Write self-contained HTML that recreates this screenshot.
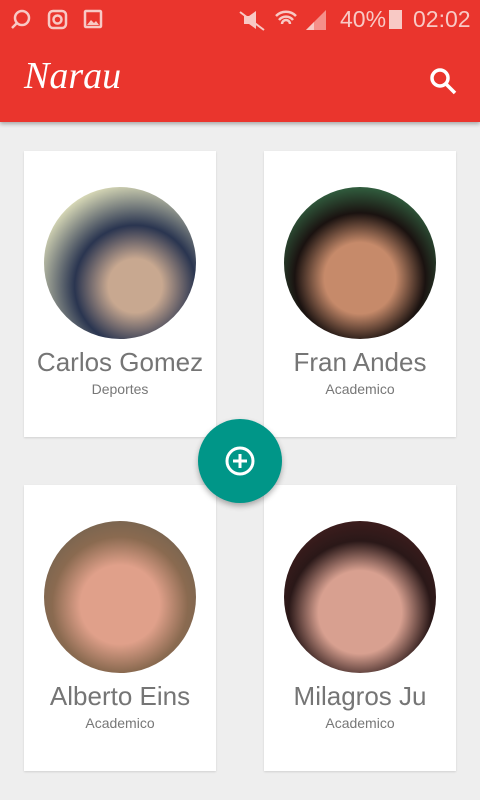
<!DOCTYPE html>
<html><head><style>
body{margin:0;width:480px;height:800px;background:#eeeeee;font-family:"Liberation Sans",sans-serif;position:relative;overflow:hidden}
.bar{position:absolute;left:0;top:0;width:480px;height:122px;background:#ea352d;box-shadow:0 2px 4px rgba(0,0,0,.3)}
.st{position:absolute;top:6px;color:#f8c9c5;font-size:23px}
.card{position:absolute;width:192px;height:286px;background:#fff;box-shadow:0 1px 2px rgba(0,0,0,.12)}
.av{position:absolute;left:20px;top:36px;width:152px;height:152px;border-radius:50%}
.nm{position:absolute;top:196px;width:100%;text-align:center;font-size:26px;color:#757575;font-weight:300}
.sb{position:absolute;top:230px;width:100%;text-align:center;font-size:14px;color:#777}
.fab{position:absolute;left:198px;top:419px;width:84px;height:84px;border-radius:50%;background:#009688;box-shadow:0 3px 6px rgba(0,0,0,.3)}
</style></head><body>
<div class="bar">
<svg style="position:absolute;left:0;top:8px" width="110" height="24" fill="none" stroke="#f8c9c5" stroke-width="2.5">
<circle cx="22" cy="10" r="7"/><path d="M17 15l-5 5"/>
<rect x="49" y="3" width="17" height="17" rx="4"/><circle cx="57.5" cy="11.5" r="4"/>
<rect x="85" y="3" width="16" height="16" rx="1"/><path d="M87 17l4-5 3 3 2-2 3 4z" fill="#f8c9c5" stroke="none"/>
</svg>
<svg style="position:absolute;left:236px;top:8px" width="92" height="24">
<path d="M8 8h5l7-5v18l-7-5H8z" fill="#f8c9c5"/><path d="M4 4l24 18" stroke="#f8c9c5" stroke-width="2"/>
<path d="M40 8a14 14 0 0 1 20 0M43 12a9 9 0 0 1 14 0M46 16a4 4 0 0 1 8 0" stroke="#f8c9c5" stroke-width="2.5" fill="none"/>
<path d="M70 22L90 2V22z" fill="#f5908a"/><path d="M70 22L78 14V22z" fill="#f8c9c5"/>
</svg>
<div class="st" style="left:340px">40%</div>
<div style="position:absolute;left:389px;top:10px;width:13px;height:19px;background:#f8c9c5"></div>
<div class="st" style="left:413px">02:02</div>
<div style="position:absolute;left:24px;top:54px;color:#fff;font-family:'Liberation Serif',serif;font-style:italic;font-size:38px">Narau</div>
<svg style="position:absolute;left:428px;top:66px" width="32" height="32" fill="none" stroke="#fff" stroke-width="3.5"><circle cx="12" cy="12" r="8"/><path d="M18 18l9 9"/></svg>
</div>
<div class="card" style="left:24px;top:151px"><div class="av" style="background:radial-gradient(circle at 60% 65%,#c8a890 0 20%,#2a3550 45%,#e8e8c0 80%)"></div><div class="nm">Carlos Gomez</div><div class="sb">Deportes</div></div>
<div class="card" style="left:264px;top:151px"><div class="av" style="background:radial-gradient(circle at 50% 60%,#c68a6a 0 30%,#1a1210 55%,#3a7a50 85%)"></div><div class="nm">Fran Andes</div><div class="sb">Academico</div></div>
<div class="card" style="left:24px;top:485px"><div class="av" style="background:radial-gradient(circle at 50% 55%,#e0a08a 0 35%,#8a6a50 60%,#6a6050 90%)"></div><div class="nm">Alberto Eins</div><div class="sb">Academico</div></div>
<div class="card" style="left:264px;top:485px"><div class="av" style="background:radial-gradient(circle at 50% 60%,#d8a090 0 35%,#2a1818 60%,#4a2020 90%)"></div><div class="nm">Milagros Ju</div><div class="sb">Academico</div></div>
<div class="fab"><svg style="position:absolute;left:26px;top:26px" width="32" height="32" fill="none" stroke="#fff" stroke-width="3"><circle cx="16" cy="16" r="13"/><path d="M16 9v14M9 16h14"/></svg></div>
</body></html>
